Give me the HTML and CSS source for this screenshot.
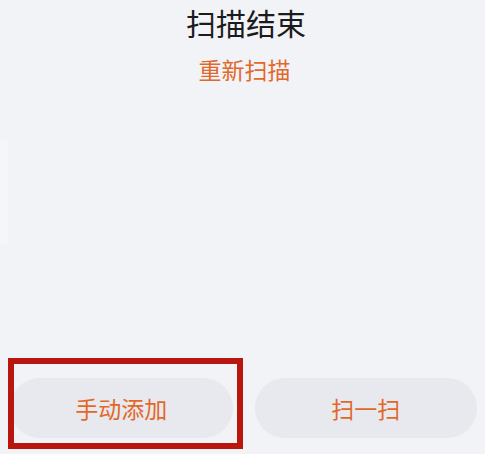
FILE: index.html
```html
<!DOCTYPE html>
<html lang="zh-CN">
<head>
    <meta charset="UTF-8">
    <meta name="viewport" content="width=device-width, initial-scale=1.0">
    <title>扫描结束</title>
    <link rel="stylesheet" href="styles.css">
</head>
<body>
    <div class="page">
        <!-- side panel peeking in from the left -->
        <div class="side-panel"></div>

        <div class="header">
            <h1 class="title">扫描结束</h1>
            <a class="rescan" href="#">重新扫描</a>
        </div>

        <div class="actions">
            <button class="action-btn">手动添加</button>
            <button class="action-btn">扫一扫</button>
            <div class="highlight-frame"></div>
        </div>
    </div>
</body>
</html>
```

FILE: styles.css
```css
* {
    box-sizing: border-box;
}

body {
    margin: 0;
    padding: 0;
    background-color: #f2f3f7;
    font-family: "Noto Sans CJK SC", "Noto Sans", sans-serif;
    overflow: hidden;
}

.page {
    position: relative;
    display: flex;
    flex-direction: column;
    height: 454px;
}

.side-panel {
    position: absolute;
    left: 0;
    top: 140px;
    width: 8px;
    height: 105px;
    background-color: #f5f6fa;
    border-radius: 0 4px 4px 0;
}

.header {
    display: flex;
    flex-direction: column;
    align-items: center;
    padding-top: 1px;
}

.title {
    margin: 0;
    font-size: 30px;
    font-weight: 400;
    line-height: 42px;
    color: #1b1b1d;
    padding-left: 7px;
}

.rescan {
    margin-top: 11px;
    padding-left: 4px;
    font-size: 23px;
    font-weight: 400;
    line-height: 30px;
    color: #e2682a;
    text-decoration: none;
}

.actions {
    position: relative;
    margin-top: auto;
    display: flex;
    gap: 22px;
    padding: 0 8px 16px 10px;
}

.action-btn {
    flex: 1;
    height: 60px;
    border: none;
    border-radius: 30px;
    background-color: #e8e9ee;
    color: #e2682a;
    font-family: inherit;
    font-size: 23px;
    padding: 0;
}

/* red box drawn over the first button */
.highlight-frame {
    position: absolute;
    left: 8px;
    top: -20px;
    width: 235px;
    height: 91px;
    border: 6px solid #b8160f;
}
```
